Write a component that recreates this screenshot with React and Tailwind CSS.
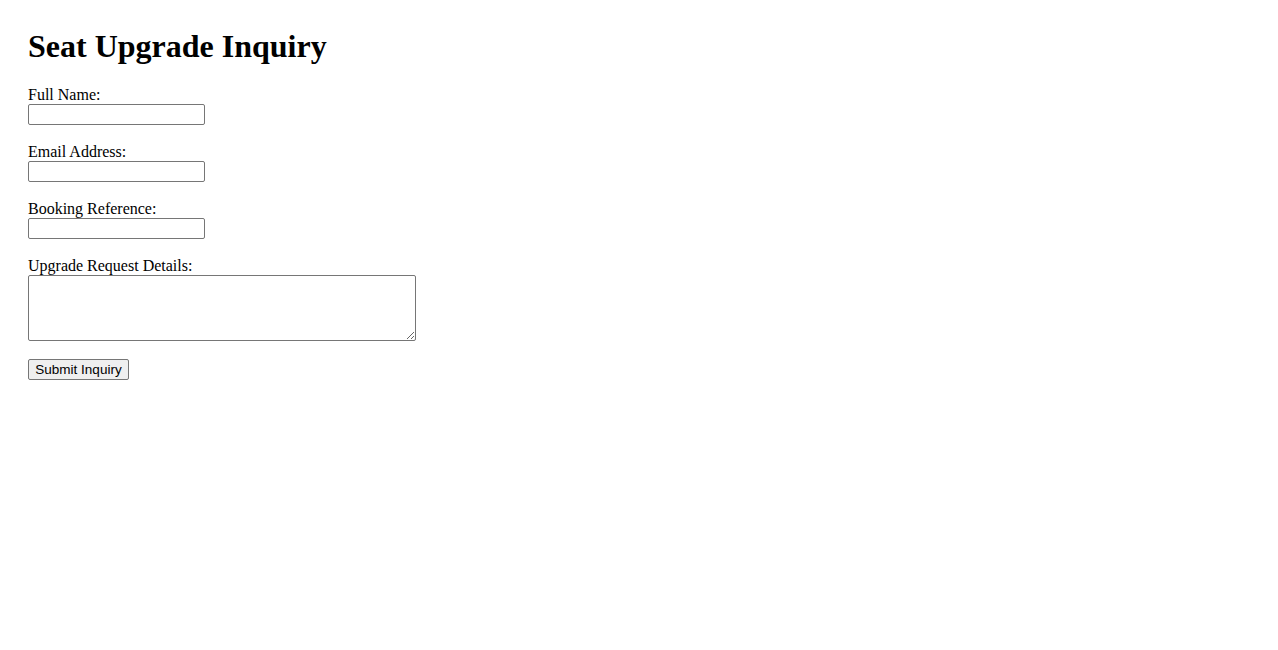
export default function App() {
  const field = (label, id) => (
    <div className="flex flex-col items-start mb-[17px]">
      <label htmlFor={id} className="block leading-[19px] text-[16px]">{label}</label>
      <input
        id={id}
        type="text"
        className="block w-[177px] h-[21px] border border-[#767676] rounded-[2px] bg-white px-[2px] text-[13.33px] font-['Liberation_Sans',sans-serif]"
      />
    </div>
  );
  return (
    <div className="min-h-[650px] bg-white text-black pl-[28px] pt-[28px] font-['Liberation_Serif',serif]">
      <h1 className="text-[32px] font-bold leading-[37px] mb-[20px]">Seat Upgrade Inquiry</h1>
      <form className="flex flex-col items-start" onSubmit={(e) => e.preventDefault()}>
        {field("Full Name:", "name")}
        {field("Email Address:", "email")}
        {field("Booking Reference:", "booking")}
        <div className="flex flex-col items-start mb-[18px]">
          <label htmlFor="details" className="block leading-[19px] text-[16px]">Upgrade Request Details:</label>
          <textarea
            id="details"
            className="block w-[388px] h-[66px] border border-[#767676] rounded-[2px] bg-white resize text-[13.33px] font-['Liberation_Mono',monospace]"
          />
        </div>
        <button
          type="submit"
          className="h-[21px] w-[101px] border border-[#767676] rounded-[2px] bg-[#efefef] text-[13.5px] leading-[15px] text-black font-['Liberation_Sans',sans-serif] px-[6px]"
        >
          Submit Inquiry
        </button>
      </form>
    </div>
  );
}
